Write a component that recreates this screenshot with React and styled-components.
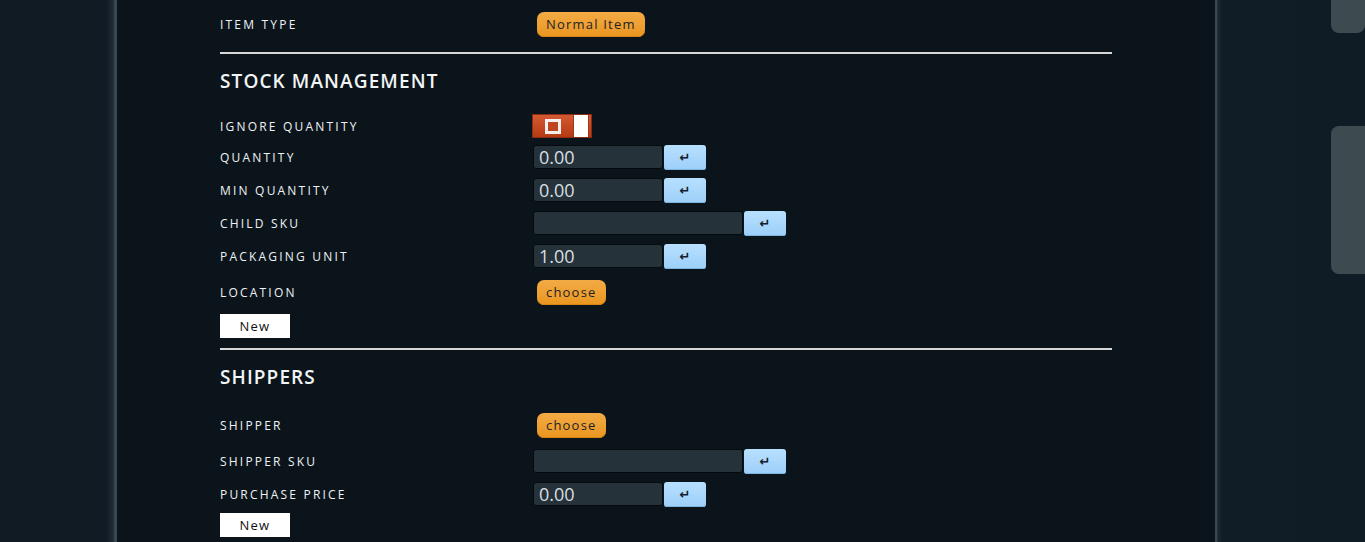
import React from 'react';
import styled, { createGlobalStyle } from 'styled-components';

const GlobalStyle = createGlobalStyle`
  html, body {
    margin: 0;
    padding: 0;
    background: #0b141a;
    overflow: hidden;
  }
  body {
    font-family: "Open Sans", "DejaVu Sans", sans-serif;
  }
`;

const Page = styled.div`
  display: flex;
  width: 1365px;
  height: 542px;
  overflow: hidden;
`;

const Sidebar = styled.div`
  width: 117px;
  flex-shrink: 0;
  background: linear-gradient(to right, #111b24 0, #111b24 106px, #1f2b35 113px, #3b4852 115px, #46535d 116px, #2a3640 117px);
`;

const Main = styled.div`
  flex: 1;
  background: #0b141a;
  padding: 12px 0 0 103px;
`;

const RightPanel = styled.div`
  width: 150px;
  flex-shrink: 0;
  display: flex;
  flex-direction: column;
  align-items: flex-end;
  background: linear-gradient(to right, #2e3a44 0, #46525c 1px, #1a2731 3px, #111d26 8px, #101c25 100%);
`;

const Thumb = styled.div`
  width: 34px;
  height: ${p => p.h}px;
  margin-top: ${p => p.mt || 0}px;
  background: #3d4a4f;
  border-radius: ${p => (p.cut ? '0 0 8px 8px' : '8px 0 0 8px')};
`;

const Content = styled.div`
  width: 892px;
  display: flex;
  flex-direction: column;
`;

const Row = styled.div`
  display: flex;
  align-items: center;
  height: ${p => p.h || 25}px;
  margin-top: ${p => p.mt || 0}px;
`;

const Label = styled.div`
  width: 313px;
  flex-shrink: 0;
  font-size: 12px;
  letter-spacing: 2.2px;
  text-transform: uppercase;
  color: #eef2f6;
`;

const Divider = styled.div`
  height: 2px;
  margin-top: ${p => p.mt}px;
  background: #d8d8d8;
`;

const Heading = styled.h2`
  margin: ${p => p.mt}px 0 0;
  height: 24px;
  line-height: 24px;
  font-size: 19px;
  font-weight: 600;
  letter-spacing: 1.1px;
  color: #f2f4f6;
`;

const Pill = styled.button`
  margin-left: 4px;
  height: 25px;
  padding: 0 ${p => p.pad || 9}px;
  border: none;
  border-radius: 7px;
  background: linear-gradient(#f3ab45, #ea9620);
  box-shadow: inset 0 -1px 0 #d88414;
  color: #1b2228;
  font-family: inherit;
  font-size: 13px;
  letter-spacing: 1.2px;
  line-height: 25px;
`;

const Toggle = styled.div`
  display: flex;
  align-items: center;
  width: 60px;
  height: 24px;
  box-sizing: border-box;
  margin-left: -1px;
  border: 1px solid #8c2c12;
  background: linear-gradient(#d35a32, #b63a14);
`;

const ToggleBox = styled.div`
  width: 16px;
  height: 15px;
  box-sizing: border-box;
  margin-left: 12px;
  border: 3px solid #f4efec;
  background: #bf4520;
`;

const ToggleKnob = styled.div`
  width: 16px;
  height: 22px;
  box-sizing: border-box;
  margin-left: auto;
  margin-right: 2px;
  background: #ffffff;
  border: 1px solid #9a3818;
  border-top: none;
  border-bottom: none;
`;

const InputGroup = styled.div`
  display: flex;
  align-items: flex-start;
  height: 25px;
`;

const Field = styled.div`
  width: ${p => (p.wide ? 210 : 130)}px;
  height: 24px;
  box-sizing: border-box;
  border: 1px solid #050a0d;
  border-radius: 3px;
  background: #253239;
  color: #d9dfe2;
  font-size: 18px;
  line-height: 22px;
  padding-left: 5px;
`;

const EnterButton = styled.button`
  width: 42px;
  height: 25px;
  margin-left: 1px;
  padding: 0;
  border: none;
  border-radius: 3px;
  background: linear-gradient(#b8e0ff, #9ccff9);
  box-shadow: inset 0 -1px 0 #7fb4e0;
  color: #14202a;
  font-family: "DejaVu Sans", sans-serif;
  font-size: 13px;
  font-weight: 700;
  line-height: 25px;
`;

const NewButton = styled.button`
  width: 70px;
  height: 24px;
  padding: 0;
  border: none;
  background: #ffffff;
  color: #111;
  font-family: inherit;
  font-size: 13px;
  letter-spacing: 1.2px;
`;

const InputRow = ({ label, value, wide, mt }) => (
  <Row mt={mt}>
    <Label>{label}</Label>
    <InputGroup>
      <Field wide={wide}>{value}</Field>
      <EnterButton>↵</EnterButton>
    </InputGroup>
  </Row>
);

export default function App() {
  return (
    <>
      <GlobalStyle />
      <Page>
        <Sidebar />
        <Main>
          <Content>
            <Row h={24}>
              <Label>Item Type</Label>
              <Pill>Normal Item</Pill>
            </Row>
            <Divider mt={16} />
            <Heading mt={15}>STOCK MANAGEMENT</Heading>
            <Row h={24} mt={21}>
              <Label>Ignore Quantity</Label>
              <Toggle>
                <ToggleBox />
                <ToggleKnob />
              </Toggle>
            </Row>
            <InputRow mt={7} label="Quantity" value="0.00" />
            <InputRow mt={8} label="Min Quantity" value="0.00" />
            <InputRow mt={8} label="Child SKU" value="" wide />
            <InputRow mt={8} label="Packaging Unit" value="1.00" />
            <Row mt={11}>
              <Label>Location</Label>
              <Pill>choose</Pill>
            </Row>
            <Row h={24} mt={9}>
              <NewButton>New</NewButton>
            </Row>
            <Divider mt={10} />
            <Heading mt={15}>SHIPPERS</Heading>
            <Row mt={24}>
              <Label>Shipper</Label>
              <Pill>choose</Pill>
            </Row>
            <InputRow mt={11} label="Shipper SKU" value="" wide />
            <InputRow mt={8} label="Purchase Price" value="0.00" />
            <Row h={24} mt={6}>
              <NewButton>New</NewButton>
            </Row>
          </Content>
        </Main>
        <RightPanel>
          <Thumb h={33} cut />
          <Thumb h={148} mt={93} />
        </RightPanel>
      </Page>
    </>
  );
}
